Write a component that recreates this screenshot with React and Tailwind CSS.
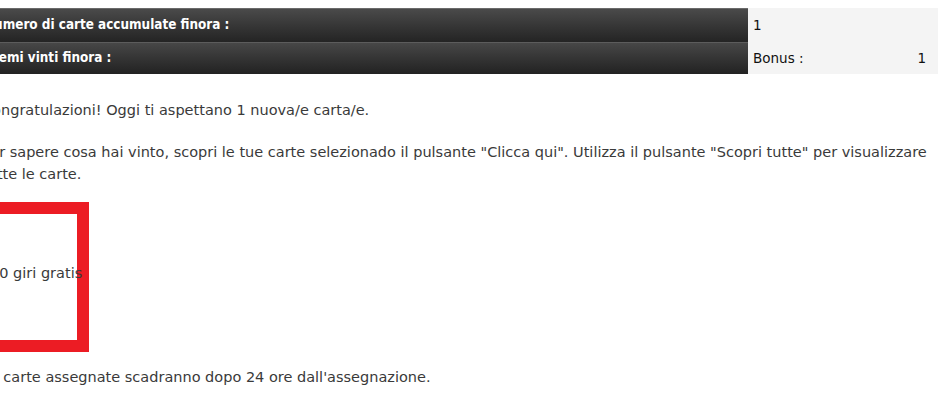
export default function App() {
  return (
    <div className="h-[400px] w-[940px] overflow-hidden bg-white">
      <div className="ml-[-22px] pt-[8px] font-['DejaVu_Sans',sans-serif] text-[14.5px] text-[#3a3a3a]">
        {/* Summary table */}
        <div className="flex w-[960px]">
          <div className="w-[770px] font-['DejaVu_Sans_Condensed','DejaVu_Sans',sans-serif] text-[13.4px]">
            <div className="flex h-[34px] items-center border-t border-[#6a6a6a] bg-gradient-to-b from-[#4a4a4a] to-[#242424] pl-[6px] font-bold text-white">
              Numero di carte accumulate finora :
            </div>
            <div className="flex h-[32px] items-center border-t border-[#5c5c5c] bg-gradient-to-b from-[#474747] to-[#222222] pl-[6px] font-bold text-white">
              Premi vinti finora :
            </div>
          </div>
          <div className="w-[190px] bg-[#f4f4f4] text-[13.5px] text-[#111]">
            <div className="flex h-[34px] items-center pl-[5px]">1</div>
            <div className="flex h-[32px] items-center justify-between pl-[5px] pr-[12px]">
              <span>Bonus :</span>
              <span>1</span>
            </div>
          </div>
        </div>

        {/* Messages */}
        <div className="pl-[4px] leading-[22px]">
          <p className="mt-[25px]">Congratulazioni! Oggi ti aspettano 1 nuova/e carta/e.</p>
          <p className="mt-[20px] w-[966px]">
            Per sapere cosa hai vinto, scopri le tue carte selezionado il pulsante "Clicca qui". Utilizza il pulsante "Scopri tutte" per visualizzare tutte le carte.
          </p>
        </div>

        {/* Card */}
        <div className="ml-[-18px] mt-[17px] flex h-[150px] w-[129px] items-center border-[12px] border-[#ec1c24]">
          <span className="ml-[18px] mt-[-6px] whitespace-nowrap">10 giri gratis</span>
        </div>

        <p className="mt-[15px] pl-[4px]">Le carte assegnate scadranno dopo 24 ore dall'assegnazione.</p>
      </div>
    </div>
  );
}
